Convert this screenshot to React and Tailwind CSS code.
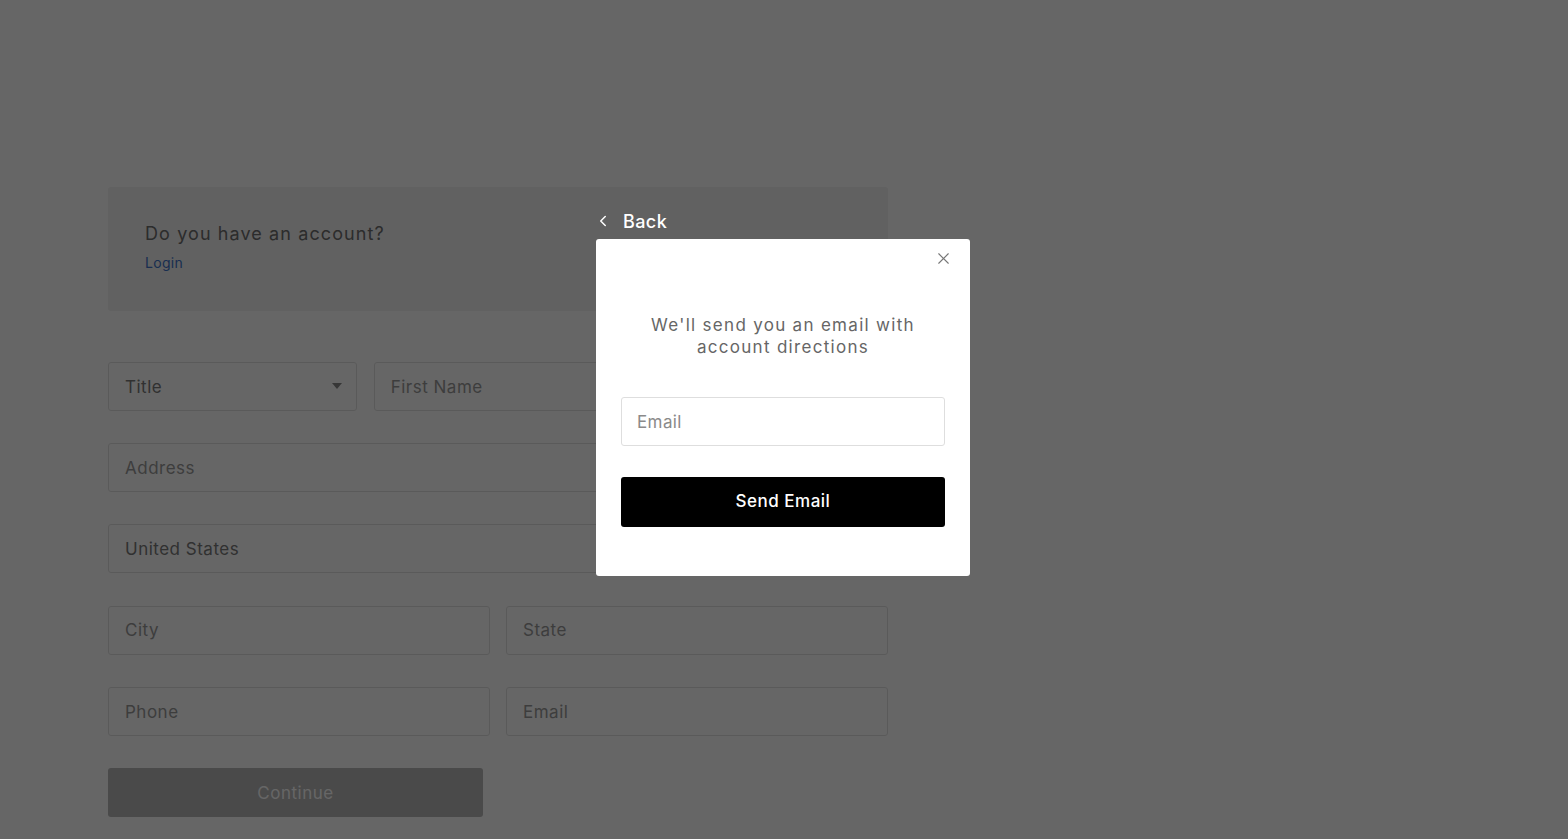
import React from 'react';
import { ChevronLeft, X } from 'lucide-react';

const font = { fontFamily: 'Inter, "Noto Sans", sans-serif' };

const Field = ({ placeholder, value, className = '' }) => (
    <div className={`h-[49px] border border-[#e2e2e2] rounded-[3px] bg-white flex items-center px-4 pt-[2px] text-[17px] tracking-[0.5px] ${value ? 'text-[#7a7a7a]' : 'text-[#9a9a9a]'} ${className}`}>
        {value || placeholder}
    </div>
);

const App = () => {
    return (
        <div className="relative w-full h-[839px] overflow-hidden bg-white" style={font}>
            {/* page under the overlay */}
            <div className="pt-[187px] pl-[108px] w-[888px]">
                <div className="h-[124px] bg-[#f2f2f2] rounded-[3px] px-[37px] pt-[33px]">
                    <p className="text-[18px] text-[#6e6e6e] tracking-[1.1px]">Do you have an account?</p>
                    <a className="text-[14px] text-[#3f74c9] block mt-[5px] tracking-[0.3px]">Login</a>
                </div>

                <div className="mt-[51px] flex flex-col gap-[32.2px]">
                    <div className="grid grid-cols-3 gap-[17px]">
                        <div className="h-[49px] border border-[#e2e2e2] rounded-[3px] bg-white flex items-center justify-between px-4 pt-[2px] text-[17px] tracking-[0.5px] text-[#7a7a7a]">
                            <span>Title</span>
                            <svg width="10" height="6" viewBox="0 0 10 6" className="mr-[-2px] mb-[4px]"><path d="M0 0h10L5 6z" fill="#8a8a8a" /></svg>
                        </div>
                        <Field placeholder="First Name" />
                        <Field placeholder="Last Name" />
                    </div>
                    <Field placeholder="Address" />
                    <Field value="United States" />
                    <div className="grid grid-cols-2 gap-[16px]">
                        <Field placeholder="City" />
                        <Field placeholder="State" />
                    </div>
                    <div className="grid grid-cols-2 gap-[16px]">
                        <Field placeholder="Phone" />
                        <Field placeholder="Email" />
                    </div>
                    <button className="w-[375px] h-[49px] bg-[#b8b8b8] rounded-[3px] text-white text-[17px] tracking-[0.5px] pt-[2px]">Continue</button>
                </div>
            </div>

            {/* overlay */}
            <div className="absolute inset-0 bg-black/60" />

            {/* modal */}
            <div className="absolute left-[596px] top-[207px] w-[374px]">
                <button className="flex items-center gap-[11px] h-[28px] text-white text-[18px] font-medium ml-[-2px]">
                    <ChevronLeft size={18} strokeWidth={2} />
                    <span className="tracking-[0.4px]">Back</span>
                </button>
                <div className="mt-[4px] bg-white rounded-[3px] h-[337px] relative px-[25px] pt-[75px]">
                    <button className="absolute right-[17px] top-[10px] text-[#777]">
                        <X size={19} strokeWidth={1.4} />
                    </button>
                    <p className="text-center text-[17px] leading-[22px] tracking-[1.3px] text-[#666]">
                        We'll send you an email with<br />account directions
                    </p>
                    <div className="mt-[39px] h-[49px] border border-[#dedede] rounded-[3px] flex items-center px-[15px] pt-[2px] text-[17px] tracking-[0.4px] text-[#8a8a8a]">
                        Email
                    </div>
                    <button className="mt-[31px] w-full h-[50px] bg-black rounded-[3px] text-white text-[17px] font-medium tracking-[0.5px]">
                        Send Email
                    </button>
                </div>
            </div>
        </div>
    );
};

export default App;
